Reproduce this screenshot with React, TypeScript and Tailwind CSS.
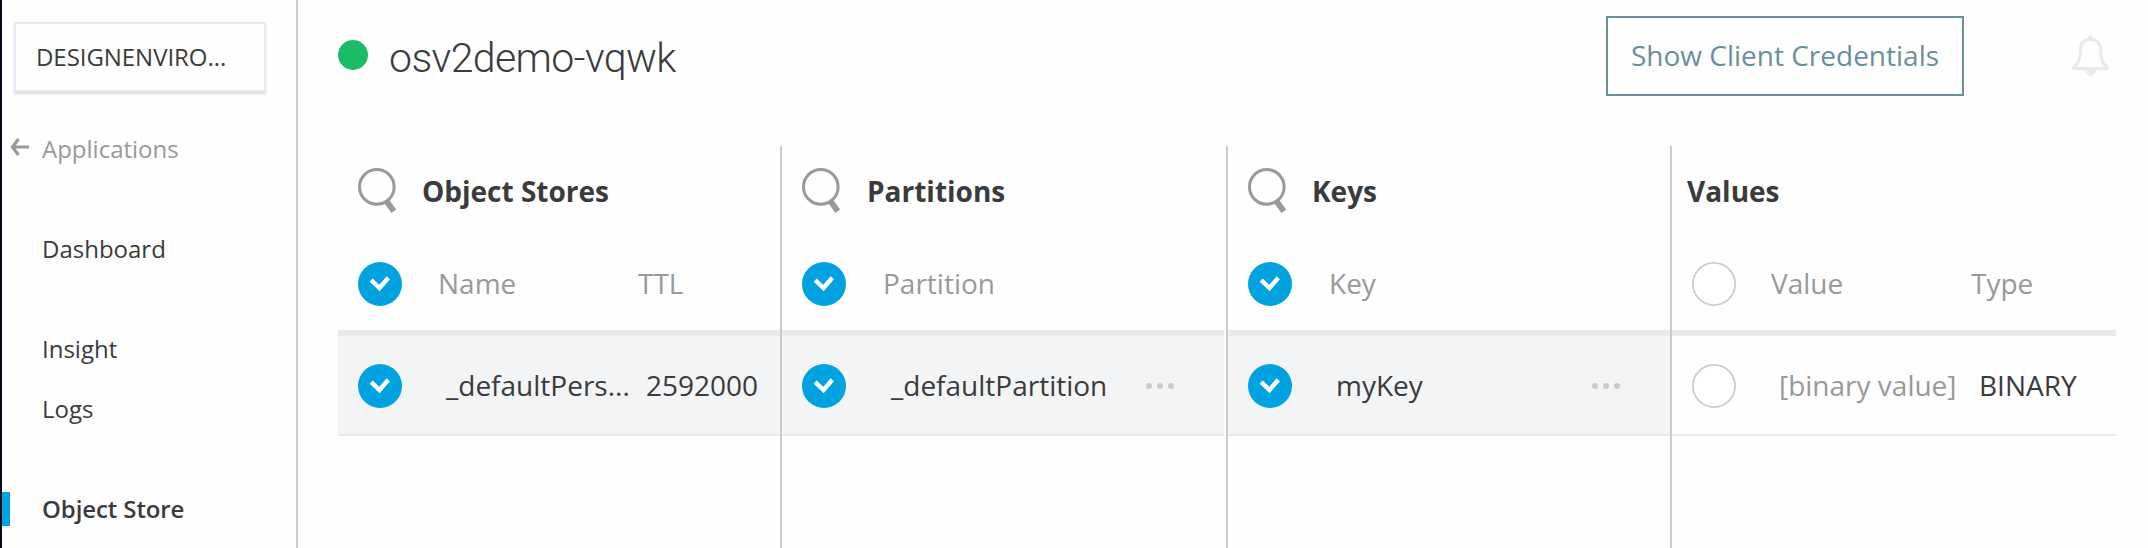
import React from "react";

const BLUE = "#00a2df";

function SearchIcon() {
  return (
    <svg width="40" height="46" viewBox="0 0 40 46" className="shrink-0">
      <circle cx="18.8" cy="18.9" r="17.3" fill="none" stroke="#98999b" strokeWidth="3" />
      <path d="M28 32.5 L35.8 43.2" stroke="#98999b" strokeWidth="5.8" fill="none" />
    </svg>
  );
}

function CheckCircle({ checked }: { checked: boolean }) {
  return (
    <svg width="44" height="44" viewBox="0 0 44 44" className="shrink-0">
      {checked ? (
        <>
          <circle cx="22" cy="22" r="22" fill={BLUE} />
          <path d="M13.2 18.1 L21.5 26 L30.3 15.8" stroke="#fff" strokeWidth="4.4" fill="none" />
        </>
      ) : (
        <circle cx="22" cy="22" r="21.1" fill="#fff" stroke="#cacbcc" strokeWidth="1.8" />
      )}
    </svg>
  );
}

function Dots() {
  return (
    <div className="mt-[19px] flex gap-[5px]">
      <span className="size-[6px] rounded-full bg-[#cacbcc]" />
      <span className="size-[6px] rounded-full bg-[#cacbcc]" />
      <span className="size-[6px] rounded-full bg-[#cacbcc]" />
    </div>
  );
}

type ColumnProps = {
  title: string;
  frame: string;
  titleGap: string;
  search?: boolean;
  checked?: boolean;
  heads: React.ReactNode;
  cells: React.ReactNode;
};

function Column({ title, frame, titleGap, search = true, checked = true, heads, cells }: ColumnProps) {
  return (
    <section className={`flex h-full shrink-0 flex-col ${frame}`}>
      <div className={`flex h-[100px] items-start ${search ? "pl-5" : ""}`}>
        {search && (
          <div className="mt-[22px] w-10">
            <SearchIcon />
          </div>
        )}
        <h2 className={`mt-[26px] text-[28px] leading-[38px] font-bold ${titleGap}`}>{title}</h2>
      </div>
      <div className="flex h-[90px] items-start border-b-6 border-[#e8e9ea] pt-4 pl-5 text-[28px] leading-[42px] text-[#98999b]">
        <CheckCircle checked={checked} />
        {heads}
      </div>
      <div
        className={`flex h-[100px] items-start border-b-2 border-[#e8e9ea] pt-7 pl-5 text-[28px] leading-[42px] ${checked ? "bg-[#f3f4f6]" : ""}`}
      >
        <CheckCircle checked={checked} />
        {cells}
      </div>
    </section>
  );
}

export default function App() {
  return (
    <div className="flex h-[548px] w-[2148px] overflow-hidden bg-[#fefefe] font-['Open_Sans',sans-serif] text-[#3a3b3c]">
      <div className="w-[2px] shrink-0 bg-[#020a1c]" />
      <aside className="flex w-[288px] shrink-0 grow-0 basis-[296px] flex-col border-r-2 border-[#cacbcc] text-2xl leading-[34px]">
        <div className="mt-[22px] ml-3 flex h-[70px] w-[252px] items-center border-2 border-[#e8e9ea] pl-5 tracking-[-0.05px] shadow-[0_2px_2px_#dcdddd]">
          DESIGNENVIRO...
        </div>
        <div className="mt-[40px] flex h-[34px] items-center pl-2 text-[#98999b]">
          <svg width="20" height="18" viewBox="0 0 20 18" className="mr-[12px] mb-[4px]">
            <path d="M2 9 H19 M8.500 1 L2.500 9 L8.500 17" fill="none" stroke="#98999b" strokeWidth="3.2" />
          </svg>
          Applications
        </div>
        <div className="mt-[66px] pl-[40px]">Dashboard</div>
        <div className="mt-[66px] pl-[40px]">Insight</div>
        <div className="mt-[26px] pl-[40px]">Logs</div>
        <div className="mt-[66px] flex h-[34px] items-center font-semibold tracking-[-0.1px]">
          <span className="mr-8 h-[34px] w-2 bg-[#00a2df]" />
          Object Store
        </div>
      </aside>
      <main className="flex w-[1850px] shrink-0 flex-col">
        <header className="flex h-[146px] items-start pl-[40px]">
          <span className="mt-[40px] size-[30px] rounded-full bg-[#1abc67]" />
          <h1 className="mt-[30px] ml-[21px] w-[1217px] font-['Roboto',sans-serif] text-[41px] leading-[56px] font-light tracking-[-0.6px]">
            osv2demo-vqwk
          </h1>
          <button className="mt-4 flex h-20 w-[358px] items-center justify-center border-2 border-[#6b8e9f] pb-[2px] text-[28px] text-[#6b8e9f]">
            Show Client Credentials
          </button>
          <svg width="38" height="44" viewBox="0 0 38 44" className="mt-[35px] ml-[107px]">
            <path
              d="M19.500 4.500 C12 4.500 9.300 9.500 9.300 15.500 C9.300 24.500 7.500 28.500 2.500 32.500 V33.500 H36.500 V32.500 C31.500 28.500 29.700 24.500 29.700 15.500 C29.700 9.500 27 4.500 19.500 4.500 Z"
              fill="none"
              stroke="#e8e9ea"
              strokeWidth="2.8"
              strokeLinejoin="round"
            />
            <circle cx="19.500" cy="3" r="2.200" fill="#e8e9ea" />
            <path d="M14 34.500 a5.500 6.200 0 0 0 11 0 z" fill="#e8e9ea" />
            <path d="M16 36 a4 4 0 0 0 3 3" fill="none" stroke="#fefefe" strokeWidth="0.9" />
          </svg>
        </header>
        <div className="flex h-[402px] pl-[40px]">
          <Column
            title="Object Stores"
            frame="w-[444px] border-r-2 border-[#cacbcc]"
            titleGap="ml-[24px]"
            heads={
              <>
                <span className="ml-9 w-[200px]">Name</span>
                <span>TTL</span>
              </>
            }
            cells={
              <>
                <span className="ml-[44px] w-[200px]">_defaultPers...</span>
                <span>2592000</span>
              </>
            }
          />
          <Column
            title="Partitions"
            frame="w-[442px]"
            titleGap="ml-[25px]"
            heads={<span className="ml-[37px]">Partition</span>}
            cells={
              <>
                <span className="ml-[45px] w-[255px]">_defaultPartition</span>
                <Dots />
              </>
            }
          />
          <div className="ml-[2px] w-[2px] shrink-0 bg-[#cacbcc]" />
          <Column
            title="Keys"
            frame="w-[444px] border-r-2 border-[#cacbcc]"
            titleGap="ml-[24px]"
            heads={<span className="ml-[37px]">Key</span>}
            cells={
              <>
                <span className="ml-[44px] w-[256px]">myKey</span>
                <Dots />
              </>
            }
          />
          <Column
            title="Values"
            frame="w-[444px]"
            titleGap="ml-[15px]"
            search={false}
            checked={false}
            heads={
              <>
                <span className="ml-[35px] w-[200px]">Value</span>
                <span>Type</span>
              </>
            }
            cells={
              <>
                <span className="ml-[43px] w-[200px] text-[#98999b]">[binary value]</span>
                <span>BINARY</span>
              </>
            }
          />
        </div>
      </main>
    </div>
  );
}
